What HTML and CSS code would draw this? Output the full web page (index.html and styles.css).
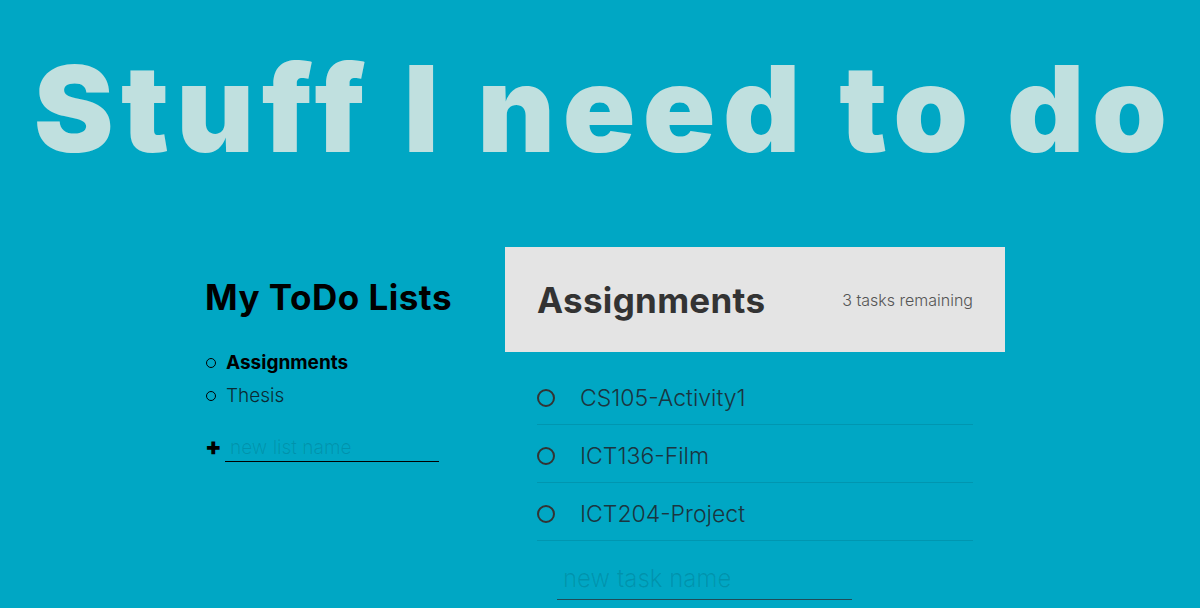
FILE: index.html
```html
<!DOCTYPE html>
<html lang="en">
<head>
<meta charset="utf-8">
<title>Stuff I need to do</title>
<link rel="stylesheet" href="styles.css">
</head>
<body>
  <h1 class="title">Stuff I need to do</h1>
  <div class="app">
    <div class="all-tasks">
      <h2 class="task-list-title">My ToDo Lists</h2>
      <ul class="task-list">
        <li class="list-name active-list">Assignments</li>
        <li class="list-name">Thesis</li>
      </ul>
      <form class="new-list-form" action="">
        <span class="btn-create" aria-label="create new list">+</span>
        <input type="text" class="new new-list" placeholder="new list name" aria-label="new list name">
      </form>
    </div>
    <div class="todo-list">
      <div class="todo-header">
        <h2 class="list-title">Assignments</h2>
        <p class="task-count">3 tasks remaining</p>
      </div>
      <div class="todo-body">
        <div class="tasks">
          <div class="task"><span class="custom-checkbox"></span><span class="task-label">CS105-Activity1</span></div>
          <div class="task"><span class="custom-checkbox"></span><span class="task-label">ICT136-Film</span></div>
          <div class="task"><span class="custom-checkbox"></span><span class="task-label">ICT204-Project</span></div>
        </div>
        <form class="new-task-form" action="">
          <input type="text" class="new new-task" placeholder="new task name" aria-label="new task name">
        </form>
      </div>
    </div>
  </div>
</body>
</html>
```
FILE: styles.css
```css
* { box-sizing: border-box; }

body {
  margin: 0;
  background: #00a7c4;
  color: #000;
  font-family: Inter, "Open Sans", sans-serif;
  font-weight: 300;
  font-size: 20px;
}

.title {
  margin: 49px 0 0;
  padding-left: 8px;
  height: 198px;
  text-align: center;
  font-size: 120px;
  line-height: 120px;
  font-weight: 900;
  letter-spacing: 7.4px;
  color: #c0e0df;
  white-space: nowrap;
}

.app {
  display: grid;
  grid-template-columns: 1fr 300px 500px 1fr;
  padding-left: 10px;
  align-items: start;
}

.all-tasks {
  grid-column: 2;
}

.task-list-title {
  margin: 30px 0 0;
  font-size: 35px;
  line-height: 40px;
  font-weight: 700;
  letter-spacing: 0.5px;
  color: #000;
}

.task-list {
  list-style: none;
  margin: 29px 0 0;
  padding: 0;
}

.list-name {
  display: flex;
  align-items: center;
  gap: 10px;
  line-height: 33px;
  font-size: 19px;
  color: #0b2a33;
}

.list-name::before {
  content: "";
  width: 8px;
  height: 8px;
  border: 1.5px solid #000;
  border-radius: 50%;
  flex: none;
  margin-left: 1px;
}

.active-list {
  font-weight: 700;
  color: #000;
}

.new-list-form {
  display: flex;
  align-items: center;
  margin-top: 18px;
}

.btn-create {
  font-size: 24px;
  font-weight: 900;
  line-height: 1;
  width: 20px;
  color: #000;
  margin-top: 1px;
}

.new {
  background: transparent;
  border: 0;
  border-bottom: 1px solid #000;
  outline: none;
  font-family: inherit;
  font-weight: 300;
  color: #000;
  padding: 6px;
}

.new::placeholder {
  color: rgba(0, 0, 0, 0.12);
}

.new-list {
  width: 214px;
  font-size: 19px;
  padding: 6px 5px 2px;
}

.todo-list {
  grid-column: 3;
}

.todo-header {
  background: #e4e4e4;
  height: 105px;
  padding: 0 32px;
  display: flex;
  align-items: center;
  justify-content: space-between;
}

.list-title {
  margin: 0;
  font-size: 35px;
  letter-spacing: 0.3px;
  font-weight: 700;
  color: #333;
}

.task-count {
  margin: 0;
  font-size: 16px;
  font-weight: 300;
  color: #555;
}

.todo-body {
  padding: 15px 32px 0;
}

.task {
  display: flex;
  align-items: center;
  padding: 17px 0 12px;
  line-height: 28px;
  font-size: 23px;
  color: #1b3540;
  border-bottom: 1px solid rgba(0, 0, 0, 0.1);
}

.custom-checkbox {
  width: 18px;
  height: 18px;
  border: 2px solid #333;
  border-radius: 50%;
  margin-right: 25px;
  flex: none;
}

.new-task-form {
  margin: 17px 0 0 20px;
}

.new-task {
  width: 295px;
  font-size: 24px;
  border-bottom-color: #1f4c58;
}
```
